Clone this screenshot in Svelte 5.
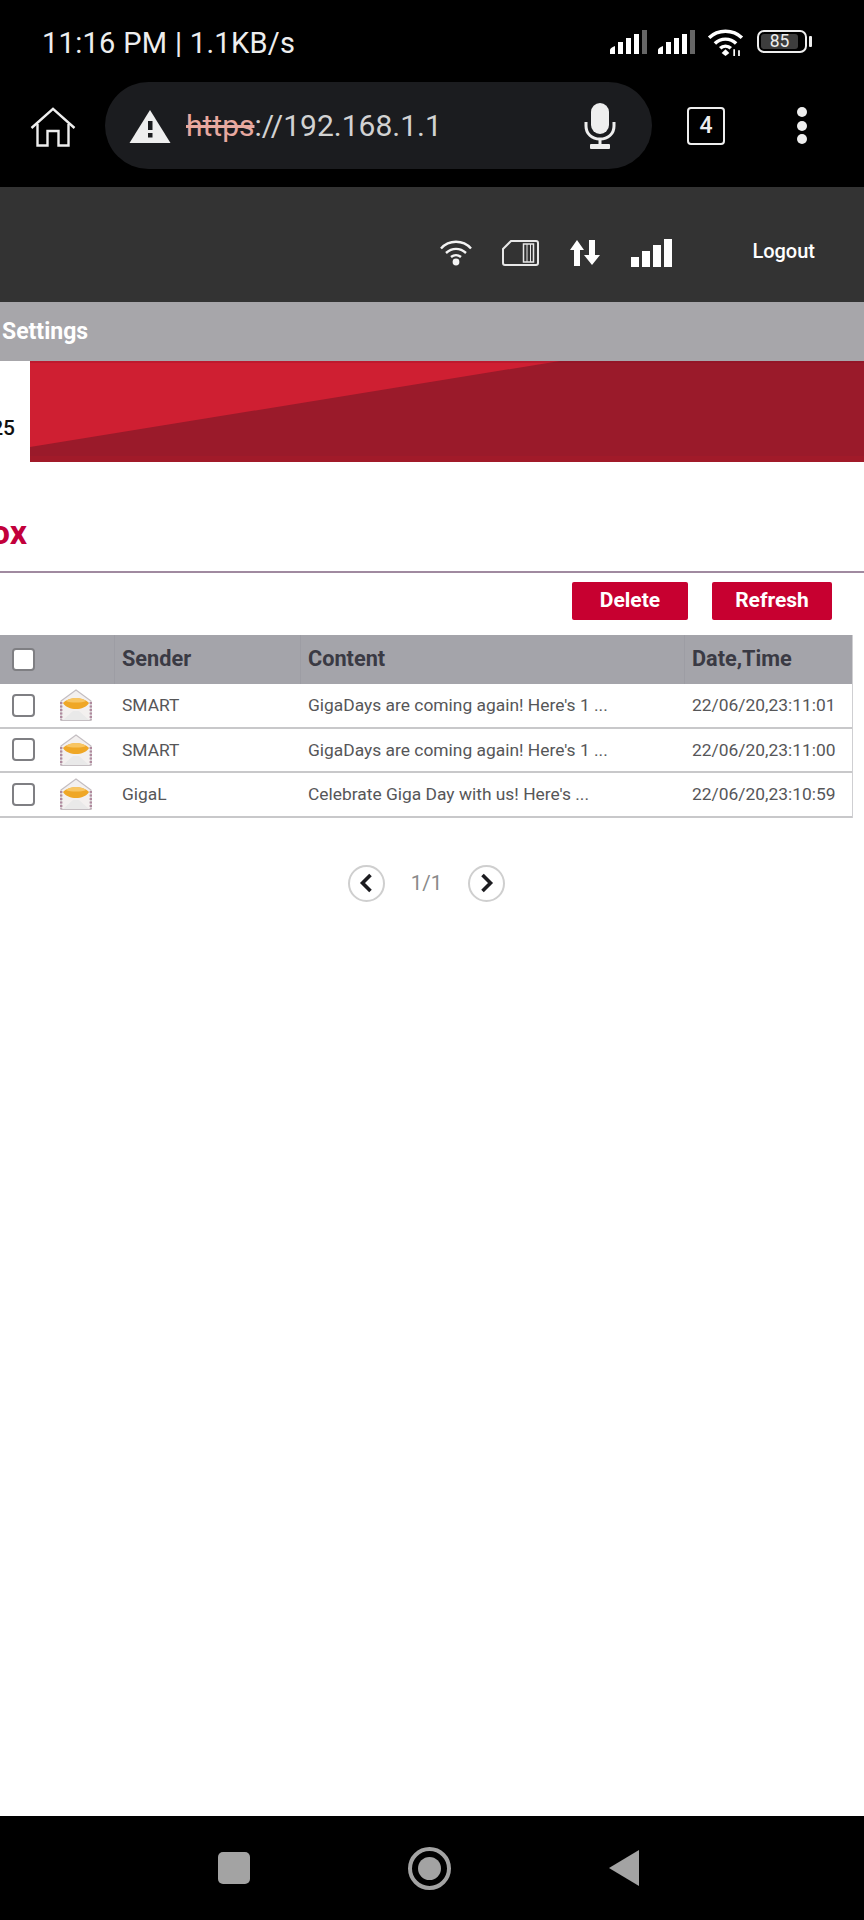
<script>
  const rows = [
    { sender: 'SMART', content: "GigaDays are coming again! Here's 1 ...", date: '22/06/20,23:11:01' },
    { sender: 'SMART', content: "GigaDays are coming again! Here's 1 ...", date: '22/06/20,23:11:00' },
    { sender: 'GigaL', content: "Celebrate Giga Day with us! Here's ...", date: '22/06/20,23:10:59' }
  ];
  const phoneBars = [0, 1];
</script>

<div class="screen">
  <div class="chrome">
    <div class="status">
      <span class="clock">11:16 PM | 1.1KB/s</span>
      <div class="status-icons">
        {#each phoneBars as _}
          <svg class="cell" viewBox="0 0 38 24" width="38" height="24">
            <path d="M0 24v-4q0-2 5-4v8z" fill="#fff" />
            <rect x="8" y="12" width="5" height="12" fill="#fff" />
            <rect x="16" y="8" width="5" height="16" fill="#fff" />
            <rect x="24" y="4" width="5" height="20" fill="#fff" />
            <rect x="32" y="0" width="5" height="24" fill="#666" />
          </svg>
        {/each}
        <svg class="wifi" viewBox="0 0 38 28" width="37" height="27" fill="none" stroke="#fff" stroke-width="3.6">
          <path d="M2 9C11 0 27 0 36 9" />
          <path d="M8 15c6-6 16-6 22 0" />
          <path d="M13.500 20c3-3 8-3 11 0" />
          <path d="M19 21l4 4-4 3-4-3z" fill="#fff" stroke="none" />
          <path d="M28 21v7M33 28v-6" stroke-width="1.800" />
        </svg>
        <div class="battery">
          <div class="shell"><span class="level">85</span></div>
          <i class="nub"></i>
        </div>
      </div>
    </div>
    <div class="toolbar">
      <svg class="home" viewBox="0 0 46 40" width="46" height="40" fill="none" stroke="#eee" stroke-width="2.400" stroke-linejoin="miter">
        <path d="M1.500 21L23 1.800 44.500 21" />
        <path d="M7.500 17v21.500h10V24h11v14.500h10V17" />
      </svg>
      <div class="pill">
        <svg class="warn" viewBox="0 0 42 34" width="42" height="34">
          <path d="M21 1L41.500 34H.5z" fill="#eee" />
          <rect x="19" y="12" width="4.500" height="9" fill="#1b1c1f" />
          <rect x="19" y="24" width="4.500" height="4.500" fill="#1b1c1f" />
        </svg>
        <span class="url"><s>https</s><span class="rest">://192.168.1.1</span></span>
        <svg class="mic" viewBox="0 0 32 46" width="32" height="46">
          <rect x="7" y="0" width="18" height="31" rx="9" fill="#eee" />
          <path d="M2 19v4c0 8 6 13 14 13s14-5 14-13v-4" fill="none" stroke="#eee" stroke-width="3" />
          <rect x="14.500" y="36" width="3" height="6" fill="#eee" />
          <rect x="6" y="41" width="20" height="5" rx="1" fill="#eee" />
        </svg>
      </div>
      <div class="tabs">4</div>
      <div class="dots"><i></i><i></i><i></i></div>
    </div>
  </div>

  <header class="router-head">
    <div class="head-icons">
      <svg viewBox="0 0 32 26" width="32" height="26" fill="none" stroke="#f4f4f4" stroke-width="2.400">
        <path d="M1 8.500C9-.5 23-.5 31 8.500" />
        <path d="M6 13c6-5.500 14-5.500 20 0" />
        <path d="M11 17c3-2.500 7-2.500 10 0" />
        <circle cx="16" cy="22" r="3.400" fill="#f4f4f4" stroke="none" />
      </svg>
      <svg viewBox="0 0 37 26" width="37" height="26" fill="none" stroke="#e8e8e8" stroke-width="2">
        <path d="M9 1h25a2 2 0 0 1 2 2v20a2 2 0 0 1-2 2H3a2 2 0 0 1-2-2V9z" />
        <rect x="21.500" y="4" width="10" height="18" stroke-width="1.500" />
        <path d="M25 4v18M28.500 4v18" stroke-width="1" />
      </svg>
      <svg viewBox="0 0 32 26" width="32" height="26" fill="#fff">
        <path d="M1 10L8 0l7 10h-4v16H5V10z" />
        <path d="M20 0h6v15h5l-8 10-8-10h5z" />
      </svg>
      <svg viewBox="0 0 42 28" width="42" height="28" fill="#fff">
        <rect x="0" y="18" width="8" height="10" />
        <rect x="11" y="12" width="8" height="16" />
        <rect x="22" y="6" width="8" height="22" />
        <rect x="33" y="0" width="8" height="28" />
      </svg>
    </div>
    <span class="logout">Logout</span>
  </header>

  <nav class="menu"><span>Settings</span></nav>

  <div class="banner">
    <div class="banner-side"><span>25</span></div>
    <div class="banner-art"></div>
  </div>

  <main class="inbox">
    <h1 class="title"><span class="title-clip"><span>Inbox</span></span></h1>
    <div class="actions">
      <button type="button">Delete</button>
      <button type="button">Refresh</button>
    </div>

    <div class="table">
      <div class="row head">
        <div class="c-check"><input type="checkbox" /></div>
        <div class="c-sender">Sender</div>
        <div class="c-content">Content</div>
        <div class="c-date">Date,Time</div>
      </div>
      {#each rows as r}
        <div class="row">
          <div class="c-check">
            <input type="checkbox" />
            <svg class="mail" viewBox="0 0 32 32" width="32" height="32">
              <path d="M1 12L16 1l15 11v19.500H1z" fill="#f3f0ef" stroke="#c4bec2" stroke-width="1.200" />
              <path d="M1.200 13v18M30.800 13v18" stroke="#b08a9e" stroke-width="2.400" stroke-dasharray="2 1.500" />
              <path d="M3 14C8 7.500 24 7.500 29 14 24 22 8 22 3 14z" fill="#efa726" />
              <path d="M6 12C10 8 22 8 26 12 22 14 10 14 6 12z" fill="#f8c562" />
              <path d="M3 31l10-9h6l10 9z" fill="#e9e9e9" />
            </svg>
          </div>
          <div class="c-sender">{r.sender}</div>
          <div class="c-content">{r.content}</div>
          <div class="c-date">{r.date}</div>
        </div>
      {/each}
    </div>

    <div class="pager">
      <span class="round">
        <svg viewBox="0 0 16 20" width="16" height="20" fill="none" stroke="#1c1c20" stroke-width="3.600"><path d="M12.500 2L4.500 10l8 8" /></svg>
      </span>
      <span class="count">1/1</span>
      <span class="round">
        <svg viewBox="0 0 16 20" width="16" height="20" fill="none" stroke="#1c1c20" stroke-width="3.600"><path d="M3.500 2l8 8-8 8" /></svg>
      </span>
    </div>
  </main>

  <footer class="nav">
    <i class="square"></i>
    <i class="ring"><b></b></i>
    <svg viewBox="0 0 30 36" width="30" height="36"><path d="M30 0v36L0 18z" fill="#a3a3a3" /></svg>
  </footer>
</div>

<style>
  :global(body) {
    margin: 0;
    background: #fff;
  }
  .screen {
    width: 864px;
    height: 1920px;
    display: flex;
    flex-direction: column;
    overflow: hidden;
    font-family: Roboto, "Liberation Sans", sans-serif;
  }
  .chrome {
    height: 187px;
    background: #000;
    color: #eee;
    flex: none;
  }
  .status {
    height: 82px;
    box-sizing: border-box;
    padding: 26px 0 0 42px;
    display: flex;
    justify-content: space-between;
  }
  .clock {
    font-size: 29px;
    line-height: 34px;
    letter-spacing: 0.300px;
    color: #eee;
  }
  .status-icons {
    display: flex;
    align-items: flex-start;
    padding: 4px 0 0;
    margin-right: 52px;
  }
  .cell {
    margin-right: 10px;
  }
  .wifi {
    margin: -1px 13px 0 1px;
  }
  .battery {
    display: flex;
    align-items: center;
  }
  .shell {
    box-sizing: border-box;
    width: 50px;
    height: 23px;
    border: 2px solid #eee;
    border-radius: 7px;
    display: flex;
    padding: 2px;
  }
  .level {
    flex: none;
    width: 37px;
    background: #3d3d3d;
    border-radius: 3px;
    font-size: 17.500px;
    line-height: 15px;
    text-align: center;
    color: #eee;
  }
  .nub {
    width: 3px;
    height: 11px;
    margin-left: 2px;
    background: #eee;
    border-radius: 1px;
  }
  .toolbar {
    display: flex;
    align-items: flex-start;
    padding-left: 30px;
    height: 105px;
  }
  .home {
    margin-top: 25px;
    flex: none;
  }
  .pill {
    margin-left: 29px;
    width: 547px;
    height: 87px;
    border-radius: 44px;
    background: #1b1c1f;
    display: flex;
    align-items: center;
    box-sizing: border-box;
    padding-left: 24px;
    flex: none;
  }
  .warn {
    flex: none;
  }
  .url {
    margin-left: 15px;
    font-size: 30px;
    color: #d2d2d2;
    flex: 1;
  }
  .url s {
    color: #e8a9a0;
  }
  .mic {
    flex: none;
    margin-right: 36px;
  }
  .tabs {
    margin: 25px 0 0 35px;
    width: 38px;
    height: 38px;
    box-sizing: border-box;
    border: 2.500px solid #eee;
    border-radius: 4px;
    text-align: center;
    font-size: 23px;
    font-weight: 500;
    line-height: 33px;
    color: #eee;
    flex: none;
  }
  .dots {
    margin: 25px 0 0 72px;
    display: flex;
    flex-direction: column;
    gap: 3.500px;
    flex: none;
  }
  .dots i {
    width: 10px;
    height: 10px;
    border-radius: 50%;
    background: #eee;
    display: block;
  }
  .router-head {
    height: 115px;
    background: #333;
    flex: none;
    display: flex;
    align-items: center;
    justify-content: flex-end;
    box-sizing: border-box;
    padding: 16px 49px 0 0;
  }
  .head-icons {
    display: flex;
    align-items: center;
    gap: 30px;
    margin-right: 79px;
  }
  .logout {
    color: #fff;
    font-size: 20px;
    font-weight: 500;
    margin-top: -3px;
  }
  .menu {
    height: 59px;
    background: #a7a6aa;
    flex: none;
    display: flex;
    align-items: center;
    padding-left: 2px;
    font-size: 23px;
    font-weight: 700;
    color: #fff;
  }
  .banner {
    height: 101px;
    flex: none;
    display: flex;
  }
  .banner-side {
    width: 30px;
    flex: none;
    overflow: hidden;
    display: flex;
    justify-content: flex-end;
    padding: 55px 15px 0 0;
    box-sizing: border-box;
    font-size: 21px;
    font-weight: 500;
    color: #111;
  }
  .banner-art {
    flex: 1;
    background: #9a1a2a;
    position: relative;
  }
  .banner-art::before {
    content: "";
    position: absolute;
    inset: 0;
    background: #cf1f32;
    clip-path: polygon(0 0, 530px 0, 0 86px);
  }
  .banner-art::after {
    content: "";
    position: absolute;
    inset: 0;
    border-top: 2px solid rgba(120, 10, 30, 0.2);
    border-bottom: 6px solid rgba(190, 30, 40, 0.2);
  }
  .inbox {
    flex: 1;
    background: #fff;
    min-height: 0;
  }
  .title {
    margin: 0;
    height: 111px;
    box-sizing: border-box;
    border-bottom: 2px solid #a08aa0;
    padding-top: 50px;
    font-size: 34px;
    line-height: 40px;
    color: #c2003b;
    font-weight: 700;
  }
  .title-clip {
    display: flex;
    justify-content: flex-end;
    width: 27px;
    white-space: nowrap;
  }
  .actions {
    display: flex;
    justify-content: flex-end;
    gap: 24px;
    padding: 9px 32px 0 0;
  }
  .actions button {
    height: 38px;
    border: 0;
    border-radius: 2px;
    background: #c70030;
    color: #fff;
    font: 700 21px Roboto, sans-serif;
    padding: 0 0 3px;
  }
  .actions button:first-child {
    width: 116px;
  }
  .actions button:last-child {
    width: 120px;
  }
  .table {
    margin: 15px 11px 0 0;
    border-right: 1px solid #cfcfd2;
  }
  .row {
    display: grid;
    grid-template-columns: 114px 186px 384px 1fr;
    height: 44.500px;
    box-sizing: border-box;
    border-bottom: 2px solid #c8c8ca;
    align-items: center;
    font-size: 17.400px;
    color: #565658;
  }
  .row.head {
    height: 49px;
    background: #a4a4aa;
    border-bottom: 0;
    font-size: 21.700px;
    font-weight: 700;
    color: #3a3a44;
  }
  .c-check {
    display: flex;
    align-items: center;
    padding-left: 12px;
    height: 100%;
    box-sizing: border-box;
  }
  .c-check input {
    appearance: none;
    margin: 0;
    flex: none;
    width: 23px;
    height: 23px;
    box-sizing: border-box;
    background: #fff;
    border: 2px solid #7f7f83;
    border-radius: 4px;
  }
  .mail {
    margin-left: 25px;
    flex: none;
  }
  .c-sender, .c-content, .c-date {
    padding-left: 8px;
    line-height: 40px;
    white-space: nowrap;
  }
  .head .c-sender, .head .c-content, .head .c-date {
    border-left: 1px solid #9d9da4;
    height: 100%;
    line-height: 47px;
    padding-left: 7px;
  }
  .pager {
    display: flex;
    justify-content: center;
    align-items: center;
    gap: 26px;
    width: 853px;
    margin-top: 47px;
  }
  .round {
    width: 37px;
    height: 37px;
    box-sizing: border-box;
    border: 2.500px solid #cfcfcf;
    border-radius: 50%;
    display: flex;
    align-items: center;
    justify-content: center;
  }
  .count {
    font-size: 20.500px;
    color: #8a8a8a;
  }
  .nav {
    height: 104px;
    flex: none;
    background: #000;
    display: flex;
    align-items: center;
    box-sizing: border-box;
    padding: 0 225px 0 218px;
    justify-content: space-between;
  }
  .square {
    width: 32px;
    height: 32px;
    border-radius: 5px;
    background: #a3a3a3;
  }
  .ring {
    width: 43px;
    height: 43px;
    box-sizing: border-box;
    border: 4px solid #a3a3a3;
    border-radius: 50%;
    display: flex;
    align-items: center;
    justify-content: center;
  }
  .ring b {
    width: 23px;
    height: 23px;
    background: #a3a3a3;
    border-radius: 50%;
  }
</style>
